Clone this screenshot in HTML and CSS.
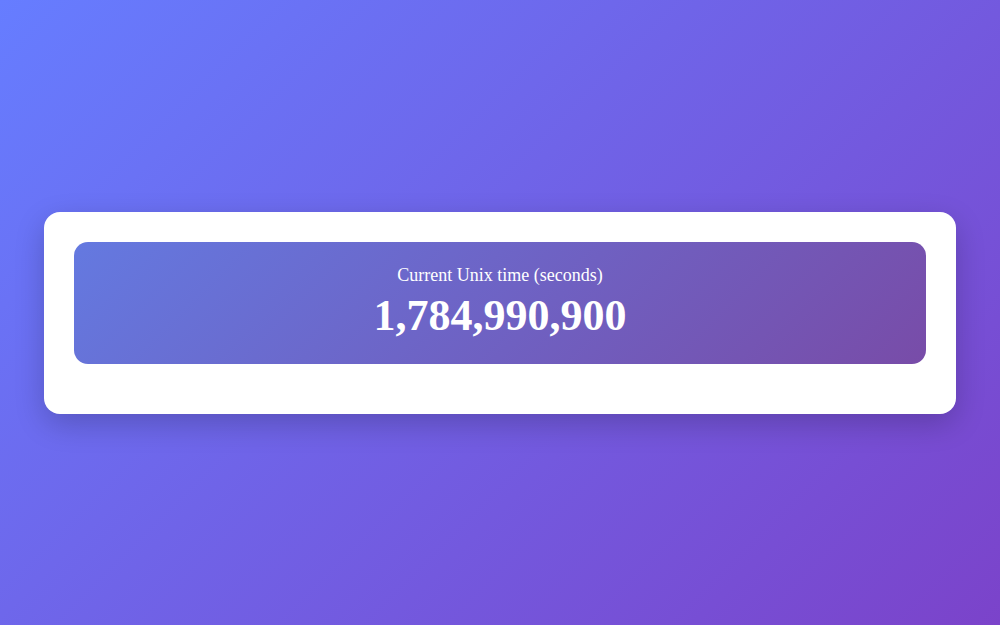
FILE: index.html
```html
<!DOCTYPE html>
<html>
<head>
  <meta charset="utf-8">
  <title>Unix time</title>
  <link rel="stylesheet" href="styles.css">
</head>
<body>
  <div class="container">
    <div class="time-box">
      <div class="label">Current Unix time (seconds)</div>
      <div class="value" id="unix">1,784,990,900</div>
    </div>
    <div class="footer"></div>
  </div>
</body>
</html>
```

FILE: styles.css
```css
html, body {
  height: 100%;
}

body {
  margin: 0;
  font-family: "Liberation Serif", "Times New Roman", serif;
  background: linear-gradient(135deg, #667dff 0%, #7b43ca 100%);
  display: flex;
  align-items: center;
  justify-content: center;
}

.container {
  width: 852px;
  padding: 30px 30px 19px;
  background: #fff;
  border-radius: 16px;
  box-shadow: 0 10px 30px rgba(0, 0, 0, 0.2);
}

.time-box {
  background: linear-gradient(135deg, #6479e0 0%, #784ca8 100%);
  color: #fff;
  border-radius: 14px;
  padding: 23px 20px 22px;
  text-align: center;
}

.label {
  font-size: 18px;
  line-height: 20px;
  margin-bottom: 4px;
}

.value {
  font-size: 44px;
  font-weight: bold;
  line-height: 53px;
}

/* empty row under the counter */
.footer {
  height: 31px;
}
```
